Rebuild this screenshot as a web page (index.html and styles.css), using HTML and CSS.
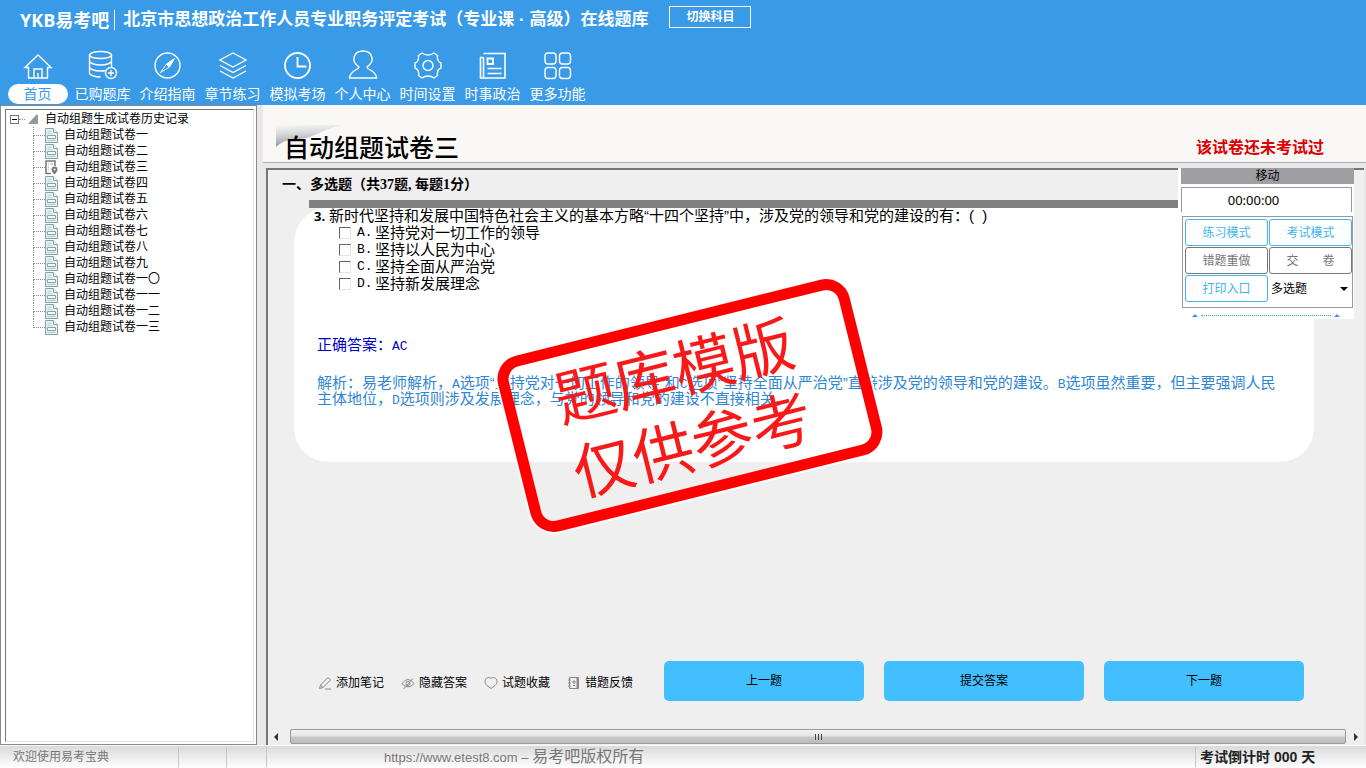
FILE: index.html
```html
<!DOCTYPE html>
<html lang="zh-CN">
<head>
    <meta charset="UTF-8">
    <meta name="viewport" content="width=device-width, initial-scale=1.0">
    <title>YKB易考吧</title>
    <link rel="stylesheet" href="styles.css">
</head>
<body>
    <!-- shared tree icons -->
    <svg class="sprite" aria-hidden="true">
        <symbol id="icon-paper" viewBox="0 0 13 15">
            <path d="M.5.5h8l4 4v10H.5z" fill="#e4f0f0" stroke="#86a3a6"/>
            <path d="M8.500.5v4h4" fill="#fff" stroke="#86a3a6"/>
            <path d="M2.500 3.500h4M2.500 5.500h4M2.500 12.500h8" stroke="#bccfcf" fill="none"/>
            <path d="M2.500 7.500h8v3h-8z" fill="#fff" stroke="#86a3a6"/>
        </symbol>
        <symbol id="icon-paper-current" viewBox="0 0 13 15">
            <path d="M1 14V1h9v5M1 13.500h5" fill="none" stroke="#777" stroke-width="1.500"/>
            <path d="M3 4h1M3 7h1M3 10h1M5 4h3" stroke="#aaa"/>
            <path d="M9.500 6.500a3 3 0 0 1 3 3c0 2-3 5-3 5s-3-3-3-5a3 3 0 0 1 3-3z" fill="#777"/>
            <circle cx="9.500" cy="9.500" r="1" fill="#fff"/>
        </symbol>
    </svg>

    <header class="header">
        <div class="brand-row">
            <span class="logo">YKB易考吧</span>
            <h1 class="site-title">北京市思想政治工作人员专业职务评定考试（专业课 · 高级）在线题库</h1>
            <button type="button" class="switch-btn">切换科目</button>
        </div>
        <nav class="nav">
            <a href="#" class="nav-item active">
                <svg viewBox="0 0 32 32"><path d="M3 17.500 16 5l13 12.500h-3.500V28h-19V17.500zM12 28v-9h8v9M16 28v-5"/></svg>
                <span>首页</span>
            </a>
            <a href="#" class="nav-item">
                <svg viewBox="0 0 32 32"><ellipse cx="13.500" cy="5" rx="11" ry="3.500"/><path d="M2.500 5v18c0 2 5 4 11 4M24.500 5v13M2.500 11c0 2 5 4 11 4s11-2 11-4M2.500 17c0 2 5 4 11 4 2 0 3.500 0 5-.5"/><circle cx="24" cy="23" r="5.500"/><path d="M21 23h6M24 20v6"/></svg>
                <span>已购题库</span>
            </a>
            <a href="#" class="nav-item">
                <svg viewBox="0 0 32 32"><circle cx="15.500" cy="15.500" r="12.500"/><path d="m22.500 8.500-5 8.500-3-3zM8.500 22.500l6-8.500 3 3z" stroke-width="1"/><path d="m22.500 8.500-5 8.500-3-3z" fill="#fff" stroke="none"/></svg>
                <span>介绍指南</span>
            </a>
            <a href="#" class="nav-item">
                <svg viewBox="0 0 32 32"><path d="M16 3 29 10 16 17 3 10zM3 15.500l13 7 13-7M3 21l13 7 13-7"/></svg>
                <span>章节练习</span>
            </a>
            <a href="#" class="nav-item">
                <svg viewBox="0 0 32 32"><circle cx="15.500" cy="15.500" r="12.500" stroke-width="1.800"/><path d="M15.500 7v9.500h9" stroke-width="1.800"/></svg>
                <span>模拟考场</span>
            </a>
            <a href="#" class="nav-item">
                <svg viewBox="0 0 32 32"><path d="M12 17c-9-6-5-16 4-16s13 10 4 16c0 3 9 3 9.500 11h-27C3 20 12 20 12 17z"/></svg>
                <span>个人中心</span>
            </a>
            <a href="#" class="nav-item">
                <svg viewBox="0 0 32 32"><path d="M10 3c2 1.500 3 2 6 2s4-.5 6-2l3.500 2.500c-.5 2.500 0 4 .5 5 .8 1.300 1.500 2 3 2.500v5c-2 .5-2.500 1.500-3 2.500-.5 1.200-.8 2.500-.5 5L22 28c-2-1.500-3-2-6-2s-4 .5-6 2l-3.500-2.500c.5-2.500 0-4-.5-5-.8-1.300-1.500-2-3-2.500v-5c2-.5 2.500-1.500 3-2.500.5-1.200.8-2.500.5-5z"/><circle cx="16" cy="15.500" r="5"/></svg>
                <span>时间设置</span>
            </a>
            <a href="#" class="nav-item">
                <svg viewBox="0 0 32 32"><path d="M6.500 3.500h21.500v24.500H3.500V7.500h3M6.500 7.500V28M10.500 18.500h14M10.500 23.500h14" stroke-width="1.600"/><path d="M10.500 8.500h5.500v5.500h-5.500z" stroke-width="1.800"/></svg>
                <span>时事政治</span>
            </a>
            <a href="#" class="nav-item">
                <svg viewBox="0 0 32 32"><rect x="3" y="3" width="11" height="11" rx="3"/><rect x="17.500" y="3" width="11" height="11" rx="3"/><rect x="3" y="17.500" width="11" height="11" rx="3"/><rect x="17.500" y="17.500" width="11" height="11" rx="3"/></svg>
                <span>更多功能</span>
            </a>
        </nav>
    </header>

    <div class="workspace">
        <aside class="sidebar">
            <div class="tree">
                <div class="tree-root">
                    <button type="button" class="toggle" aria-label="折叠"></button>
                    <i class="root-line"></i>
                    <svg viewBox="0 0 10 10"><path d="M0 10 8 1q2-1 2 0v9z" fill="#999"/></svg>
                    <span>自动组题生成试卷历史记录</span>
                </div>
                <ul class="tree-list">
                    <li><svg><use href="#icon-paper"/></svg>自动组题试卷一</li>
                    <li><svg><use href="#icon-paper"/></svg>自动组题试卷二</li>
                    <li><svg><use href="#icon-paper-current"/></svg>自动组题试卷三</li>
                    <li><svg><use href="#icon-paper"/></svg>自动组题试卷四</li>
                    <li><svg><use href="#icon-paper"/></svg>自动组题试卷五</li>
                    <li><svg><use href="#icon-paper"/></svg>自动组题试卷六</li>
                    <li><svg><use href="#icon-paper"/></svg>自动组题试卷七</li>
                    <li><svg><use href="#icon-paper"/></svg>自动组题试卷八</li>
                    <li><svg><use href="#icon-paper"/></svg>自动组题试卷九</li>
                    <li><svg><use href="#icon-paper"/></svg>自动组题试卷一〇</li>
                    <li><svg><use href="#icon-paper"/></svg>自动组题试卷一一</li>
                    <li><svg><use href="#icon-paper"/></svg>自动组题试卷一二</li>
                    <li><svg><use href="#icon-paper"/></svg>自动组题试卷一三</li>
                </ul>
            </div>
        </aside>

        <main class="main">
            <div class="paper-header">
                <svg class="swoosh" viewBox="0 0 66 28">
                    <defs>
                        <linearGradient id="swoosh-fill" x1="0.300" y1="0" x2="0.450" y2="1">
                            <stop offset="0" stop-color="#f4f4f4"/>
                            <stop offset="0.400" stop-color="#d4d6d8"/>
                            <stop offset="1" stop-color="#8f9296"/>
                        </linearGradient>
                    </defs>
                    <path d="M0 2h66C46 6 38 15 24 16 14 16 6 18 0 24z" fill="url(#swoosh-fill)"/>
                </svg>
                <h2 class="paper-title">自动组题试卷三</h2>
                <span class="paper-status">该试卷还未考试过</span>
            </div>

            <section class="exam">
                <h3 class="section-title">一、多选题（共37题, 每题1分）</h3>
                <div class="divider"></div>
                <div class="card">
                    <p class="question"><b>3.</b>新时代坚持和发展中国特色社会主义的基本方略“十四个坚持”中，涉及党的领导和党的建设的有：( &nbsp;)</p>
                    <div class="options">
                        <label><input type="checkbox"><span class="letter">A.</span>坚持党对一切工作的领导</label>
                        <label><input type="checkbox"><span class="letter">B.</span>坚持以人民为中心</label>
                        <label><input type="checkbox"><span class="letter">C.</span>坚持全面从严治党</label>
                        <label><input type="checkbox"><span class="letter">D.</span>坚持新发展理念</label>
                    </div>
                    <p class="answer">正确答案：<span class="en">AC</span></p>
                    <p class="analysis">解析：易老师解析，<span class="en">A</span>选项“坚持党对一切工作的领导”和<span class="en">C</span>选项“坚持全面从严治党”直接涉及党的领导和党的建设。<span class="en">B</span>选项虽然重要，但主要强调人民主体地位，<span class="en">D</span>选项则涉及发展理念，与党的领导和党的建设不直接相关。</p>
                    <div class="stamp">题库模版<br>仅供参考</div>
                </div>

                <div class="actions">
                    <div class="tools">
                        <button type="button" class="tool">
                            <svg viewBox="0 0 14 14"><path d="m1.500 12.500 1-3.500L10 1.500 12.500 4 5 11.500zM2.500 9 5 11.500M7 13h6"/></svg>添加笔记
                        </button>
                        <button type="button" class="tool">
                            <svg viewBox="0 0 14 14"><path d="M1 7.500q6-8 12 0-6 7-12 0zM2.500 13 12 2.500"/><circle cx="7" cy="7.500" r="2"/></svg>隐藏答案
                        </button>
                        <button type="button" class="tool">
                            <svg viewBox="0 0 14 14"><path d="M7 2.500C9 .5 13 1.500 13 5.500c0 3.500-3.500 5-6 7-2.500-2-6-3.500-6-7C1 1.500 5 .5 7 2.500z"/></svg>试题收藏
                        </button>
                        <button type="button" class="tool">
                            <svg viewBox="0 0 14 14"><path d="M2.500 1.500h9v11h-9zM1 4h3M1 7h3M1 10h3M6 5h2v2H6zM6 9.500h2"/><path d="M10.500 1.500v11" stroke-width="2"/></svg>错题反馈
                        </button>
                    </div>
                    <div class="steps">
                        <button type="button" class="step-btn">上一题</button>
                        <button type="button" class="step-btn">提交答案</button>
                        <button type="button" class="step-btn">下一题</button>
                    </div>
                </div>

                <div class="scrollbar">
                    <svg viewBox="0 0 8 8"><path d="M6 0v8L2 4z"/></svg>
                    <div class="thumb"><i></i><i></i><i></i></div>
                    <svg viewBox="0 0 8 8"><path d="M2 0v8l4-4z"/></svg>
                </div>
            </section>

            <div class="panel">
                <div class="panel-title">移动</div>
                <div class="timer">00:00:00</div>
                <div class="panel-grid">
                    <button type="button" class="mode-btn">练习模式</button>
                    <button type="button" class="mode-btn">考试模式</button>
                    <button type="button" class="mode-btn muted">错题重做</button>
                    <button type="button" class="mode-btn muted">交　　卷</button>
                    <button type="button" class="mode-btn">打印入口</button>
                    <div class="type-field">
                        <select class="type-select" aria-label="题型">
                            <option>多选题</option>
                        </select>
                        <svg viewBox="0 0 8 4"><path d="M0 0h8L4 4z"/></svg>
                    </div>
                </div>
                <div class="collapse">
                    <svg viewBox="0 0 6 3"><path d="M0 3h6L3 0z"/></svg>
                    <i></i>
                    <svg viewBox="0 0 6 3"><path d="M0 3h6L3 0z"/></svg>
                </div>
            </div>
        </main>
    </div>

    <footer class="status-bar">
        <span class="cell welcome">欢迎使用易考宝典</span>
        <span class="cell blank"></span>
        <span class="cell blank"></span>
        <span class="cell copyright"><a href="#">https://www.etest8.com</a> – <span class="owner">易考吧版权所有</span></span>
        <span class="cell countdown">考试倒计时 000 天</span>
    </footer>
</body>
</html>
```

FILE: styles.css
```css
* {
    box-sizing: border-box;
}
body {
    margin: 0;
    min-height: 100vh;
    display: flex;
    flex-direction: column;
    font-family: "Liberation Sans", "Noto Sans CJK SC", sans-serif;
    font-size: 12px;
    line-height: 16px;
    color: #000;
    background-color: #efefef;
}
button,
select,
input {
    font: inherit;
    margin: 0;
}
button {
    padding: 0;
    cursor: pointer;
}
h1, h2, h3, p, ul {
    margin: 0;
    padding: 0;
}
svg {
    display: block;
    flex: none;
}
.sprite {
    position: absolute;
    width: 0;
    height: 0;
}

/* header */
.header {
    height: 105px;
    background-color: #399ae8;
    color: #fff;
}
.brand-row {
    display: flex;
    align-items: center;
    height: 40px;
    padding-left: 20px;
}
.logo {
    padding-right: 5px;
    border-right: 1px solid #fff;
    font-size: 18px;
    font-weight: bold;
    line-height: 20px;
    font-family: "Open Sans", "Noto Sans CJK SC", sans-serif;
}
.site-title {
    padding-left: 8px;
    font-size: 17px;
    font-weight: bold;
    line-height: 20px;
}
.switch-btn {
    width: 82px;
    height: 22px;
    margin: 0 0 7px 21px;
    border: 1px solid #fff;
    background: none;
    color: #fff;
    font-weight: bold;
}
.nav {
    display: flex;
    padding: 10px 0 0 5px;
}
.nav-item {
    display: flex;
    flex-direction: column;
    align-items: center;
    width: 65px;
    color: #fff;
    font-size: 14px;
    line-height: 20px;
    text-decoration: none;
    white-space: nowrap;
}
.nav-item svg {
    width: 32px;
    height: 32px;
    margin-bottom: 2px;
    fill: none;
    stroke: #fff;
    stroke-width: 1.4;
}
.nav-item.active span {
    width: 60px;
    border-radius: 10px;
    background-color: #fff;
    color: #399ae8;
    text-align: center;
}

/* left tree */
.workspace {
    flex: 1;
    display: flex;
}
.sidebar {
    display: flex;
    width: 257px;
    padding: 3px 2px 2px 4px;
    border: 1px solid #8a8a8a;
    background-color: #fff;
}
.tree {
    flex: 1;
    padding: 0 0 0 4px;
    border: 1px solid #e3e3e3;
    border-top-color: #777;
    border-left-color: #777;
}
.tree-root {
    display: flex;
    align-items: center;
    height: 16px;
    margin-top: 1px;
    line-height: 18px;
}
.toggle {
    display: flex;
    align-items: center;
    justify-content: center;
    width: 9px;
    height: 9px;
    border: 1px solid #777;
    background: #fff;
}
.toggle::before {
    content: "";
    width: 5px;
    height: 1px;
    background-color: #000;
}
.root-line {
    width: 6px;
    margin-right: 3px;
    border-top: 1px dotted #888;
}
.tree-root svg {
    width: 10px;
    height: 10px;
    margin-right: 7px;
}
.tree-list {
    margin-left: 23px;
    list-style: none;
}
.tree-list li {
    position: relative;
    display: flex;
    align-items: center;
    height: 16px;
    padding-left: 12px;
}
.tree-list li::before {
    content: "";
    position: absolute;
    left: 0;
    top: 0;
    width: 11px;
    height: 8px;
    border-left: 1px dotted #888;
    border-bottom: 1px dotted #888;
}
.tree-list li:not(:last-child)::after {
    content: "";
    position: absolute;
    left: 0;
    top: 8px;
    height: 8px;
    border-left: 1px dotted #888;
}
.tree-list svg {
    width: 13px;
    height: 15px;
    margin-right: 6px;
}

/* right side */
.main {
    position: relative;
    flex: 1;
    display: flex;
    flex-direction: column;
    padding-left: 6px;
    background-color: #e8e8e8;
}
.paper-header {
    position: relative;
    display: flex;
    align-items: center;
    justify-content: space-between;
    height: 58px;
    padding: 28px 42px 0 21px;
    border-bottom: 1px solid #aaa;
    background-color: #f9f8f7;
}
.swoosh {
    position: absolute;
    left: 13px;
    top: 18px;
    width: 66px;
    height: 28px;
}
.paper-title {
    position: relative;
    font-size: 25px;
    font-weight: 500;
    line-height: 30px;
}
.paper-status {
    color: #d00;
    font-size: 16px;
    font-weight: bold;
}
.exam {
    flex: 1;
    display: flex;
    flex-direction: column;
    margin: 5px 2px 0 3px;
    border-top: 2px solid #777;
    border-left: 2px solid #777;
    background-color: #efefef;
}
.section-title {
    padding-left: 14px;
    font-family: "Liberation Serif", "Noto Sans CJK SC", serif;
    font-size: 14px;
    line-height: 30px;
}
.divider {
    height: 8px;
    margin: 0 46px 0 41px;
    background-color: #808080;
}
.card {
    position: relative;
    margin: 0 50px 0 26px;
    padding: 0 36px 55px 20px;
    border-radius: 34px;
    background-color: #fff;
    font-size: 15px;
}
.question {
    display: flex;
}
.question b {
    width: 15px;
    font-family: "Open Sans", sans-serif;
    font-size: 13px;
}
.options label {
    display: flex;
    align-items: center;
    height: 17px;
    margin-left: 25px;
}
.options input {
    appearance: none;
    width: 12px;
    height: 12px;
    border: 1px solid #e3e3e3;
    border-top-color: #666;
    border-left-color: #666;
    background-color: #fff;
}
.options input:checked {
    background-color: #399ae8;
}
.letter {
    width: 18px;
    margin-left: 6px;
    font-family: "Liberation Mono", monospace;
    font-size: 13px;
}
.en {
    font-family: "Liberation Mono", monospace;
    font-size: 13px;
    line-height: 1px;
}
.answer {
    margin-top: 45px;
    padding-left: 3px;
    color: #0000c8;
}
.analysis {
    margin-top: 22px;
    padding-left: 3px;
    color: #2f86d2;
}
.stamp {
    position: absolute;
    left: 215px;
    top: 107px;
    width: 362px;
    height: 181px;
    padding: 6px 14px 0 0;
    border: 11px solid #f00;
    border-radius: 24px;
    box-shadow: 0 0 0 2px #fff;
    color: #fa1919;
    font-size: 61px;
    line-height: 76px;
    text-align: center;
    white-space: nowrap;
    transform: rotate(-14deg);
    pointer-events: none;
}

/* buttons under the question */
.actions {
    display: flex;
    align-items: center;
    justify-content: space-between;
    margin-top: auto;
    padding: 0 60px 27px 50px;
}
.tools {
    display: flex;
    gap: 17px;
}
.tool {
    display: flex;
    align-items: center;
    gap: 4px;
    border: none;
    background: none;
    color: #000;
    line-height: 20px;
}
.tool svg {
    width: 14px;
    height: 14px;
    fill: none;
    stroke: #888;
}
.tools {
    padding-top: 3px;
}
.steps {
    display: flex;
    gap: 20px;
}
.step-btn {
    width: 200px;
    height: 40px;
    border: none;
    border-radius: 5px;
    background-color: #42bfff;
    color: #000;
}
.scrollbar {
    display: flex;
    align-items: center;
    gap: 6px;
    height: 17px;
    padding: 0 4px;
}
.scrollbar svg {
    width: 8px;
    height: 8px;
    fill: #333;
}
.thumb {
    flex: 1;
    display: flex;
    align-items: center;
    justify-content: center;
    gap: 2px;
    height: 15px;
    margin-left: 4px;
    border: 1px solid #999;
    border-radius: 2px;
    background: linear-gradient(#f3f3f3, #e6e6e6 45%, #c8c8c8 55%, #bcbcbc);
}
.thumb i {
    width: 1px;
    height: 6px;
    background-color: #444;
}

/* floating control panel */
.panel {
    position: absolute;
    top: 63px;
    right: 12px;
    width: 176px;
    padding-left: 3px;
    background-color: #fff;
}
.panel-title {
    height: 16px;
    background-color: #9f9fa3;
    text-align: center;
}
.timer {
    height: 25px;
    margin: 3px 2px 0 0;
    padding-right: 26px;
    border: 1px solid #999;
    border-bottom: none;
    font-family: "Noto Sans", sans-serif;
    font-size: 13px;
    line-height: 24px;
    text-align: center;
}
.panel-grid {
    display: grid;
    grid-template-columns: 1fr 1fr;
    gap: 1px;
    margin: 4px 1px 0;
    padding: 2px 0 5px 2px;
    border: 1px solid #999;
}
.mode-btn {
    height: 27px;
    border: 1px solid #42b4ee;
    border-radius: 3px;
    background-color: #fff;
    color: #42b4ee;
}
.mode-btn.muted {
    border-color: #777;
    color: #777;
}
.type-field {
    display: grid;
    align-items: center;
}
.type-select {
    grid-area: 1 / 1;
    appearance: none;
    width: 100%;
    height: 26px;
    padding: 0 0 0 2px;
    border: none;
    background: none;
    color: #000;
}
.type-field svg {
    grid-area: 1 / 1;
    justify-self: end;
    width: 8px;
    height: 4px;
    margin-right: 4px;
    pointer-events: none;
}
.collapse {
    display: flex;
    align-items: center;
    gap: 3px;
    height: 11px;
    padding: 3px 14px 0 11px;
}
.collapse svg {
    width: 6px;
    height: 3px;
    fill: #399ae8;
}
.collapse i {
    flex: 1;
    border-top: 1px dotted #399ae8;
}

/* status bar */
.status-bar {
    display: flex;
    align-items: center;
    height: 23px;
    border-top: 1px solid #f8f8f8;
    background: linear-gradient(#dadada, #fff);
    color: #777;
}
.cell {
    height: 20px;
    border-right: 1px solid #c4c4c4;
    line-height: 20px;
    white-space: nowrap;
}
.welcome {
    width: 179px;
    padding-left: 13px;
}
.blank {
    width: 48px;
}
.blank + .blank {
    width: 40px;
}
.copyright {
    flex: 1;
    padding-left: 117px;
    font-size: 13px;
}
.copyright a {
    color: inherit;
    text-decoration: none;
}
.owner {
    font-size: 16px;
}
.countdown {
    width: 170px;
    padding-left: 4px;
    border-right: none;
    color: #222;
    font-size: 14px;
    font-weight: bold;
}
```
